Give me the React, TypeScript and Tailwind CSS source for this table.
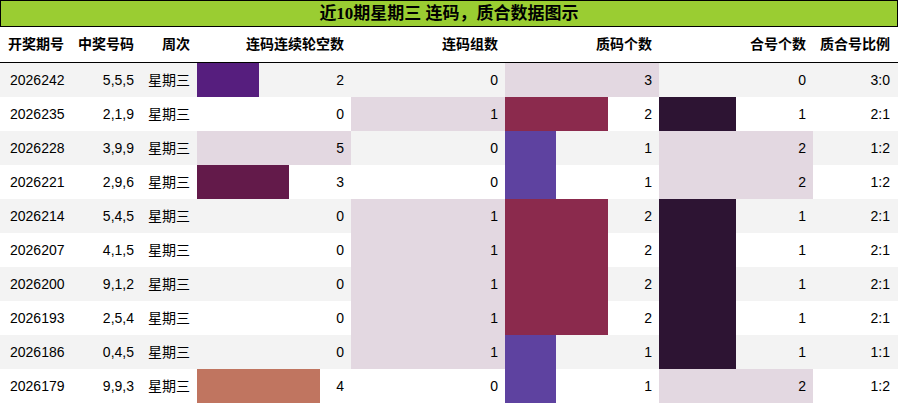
import React from "react";

type Row = [string, string, number, number, number, number, string];

const rows: Row[] = [
  ["2026242", "5,5,5", 2, 0, 3, 0, "3:0"],
  ["2026235", "2,1,9", 0, 1, 2, 1, "2:1"],
  ["2026228", "3,9,9", 5, 0, 1, 2, "1:2"],
  ["2026221", "2,9,6", 3, 0, 1, 2, "1:2"],
  ["2026214", "5,4,5", 0, 1, 2, 1, "2:1"],
  ["2026207", "4,1,5", 0, 1, 2, 1, "2:1"],
  ["2026200", "9,1,2", 0, 1, 2, 1, "2:1"],
  ["2026193", "2,5,4", 0, 1, 2, 1, "2:1"],
  ["2026186", "0,4,5", 0, 1, 1, 1, "1:1"],
  ["2026179", "9,9,3", 4, 0, 1, 2, "1:2"],
];

const LIGHT = "bg-[#e3d8e1]";

const barCols: { max: number; colors: Record<number, string> }[] = [
  { max: 5, colors: { 1: "bg-[#3b1f6b]", 2: "bg-[#561e7e]", 3: "bg-[#631a4a]", 4: "bg-[#c07560]", 5: LIGHT } },
  { max: 1, colors: { 1: LIGHT } },
  { max: 3, colors: { 1: "bg-[#5e42a0]", 2: "bg-[#8b2a4d]", 3: LIGHT } },
  { max: 2, colors: { 1: "bg-[#2d1433]", 2: LIGHT } },
];

const grid = "grid grid-cols-[72px_69px_56px_154px_154px_154px_154px_85px]";

function BarCell({ value, col }: { value: number; col: number }) {
  const c = barCols[col];
  const pct = (value / c.max) * 100;
  return (
    <div className="relative h-full flex items-center justify-end pr-[7px]">
      {value > 0 && (
        <div
          className={`absolute left-0 top-0 h-full ${c.colors[value]}`}
          style={{ width: `${pct}%` }}
        />
      )}
      <span className="relative">{value}</span>
    </div>
  );
}

export default function App() {
  return (
    <div
      className="w-[898px] h-[404px] bg-white text-black text-[14px]"
      style={{ fontFamily: '"Liberation Sans", "Noto Sans CJK SC", sans-serif' }}
    >
      <div
        className="h-[27px] border border-black bg-[#9acd32] flex items-center justify-center font-bold text-[17px] leading-none"
        style={{ fontFamily: '"Liberation Serif", "Noto Sans CJK SC", serif' }}
      >
        近10期星期三 连码，质合数据图示
      </div>
      <div className={`${grid} h-[36px] border-b border-black font-bold items-center`}>
        <div className="pl-[8px]">开奖期号</div>
        <div className="text-right pr-[7px]">中奖号码</div>
        <div className="text-right pr-[7px]">周次</div>
        <div className="text-right pr-[7px]">连码连续轮空数</div>
        <div className="text-right pr-[7px]">连码组数</div>
        <div className="text-right pr-[7px]">质码个数</div>
        <div className="text-right pr-[7px]">合号个数</div>
        <div className="text-right pr-[8px]">质合号比例</div>
      </div>
      {rows.map((r, i) => (
        <div
          key={r[0]}
          className={`${grid} h-[34px] items-center ${i % 2 === 0 ? "bg-[#f3f3f3]" : "bg-white"}`}
        >
          <div className="pl-[10px]">{r[0]}</div>
          <div className="text-right pr-[7px]">{r[1]}</div>
          <div className="text-right pr-[7px]">星期三</div>
          <BarCell value={r[2]} col={0} />
          <BarCell value={r[3]} col={1} />
          <BarCell value={r[4]} col={2} />
          <BarCell value={r[5]} col={3} />
          <div className="text-right pr-[8px]">{r[6]}</div>
        </div>
      ))}
    </div>
  );
}
